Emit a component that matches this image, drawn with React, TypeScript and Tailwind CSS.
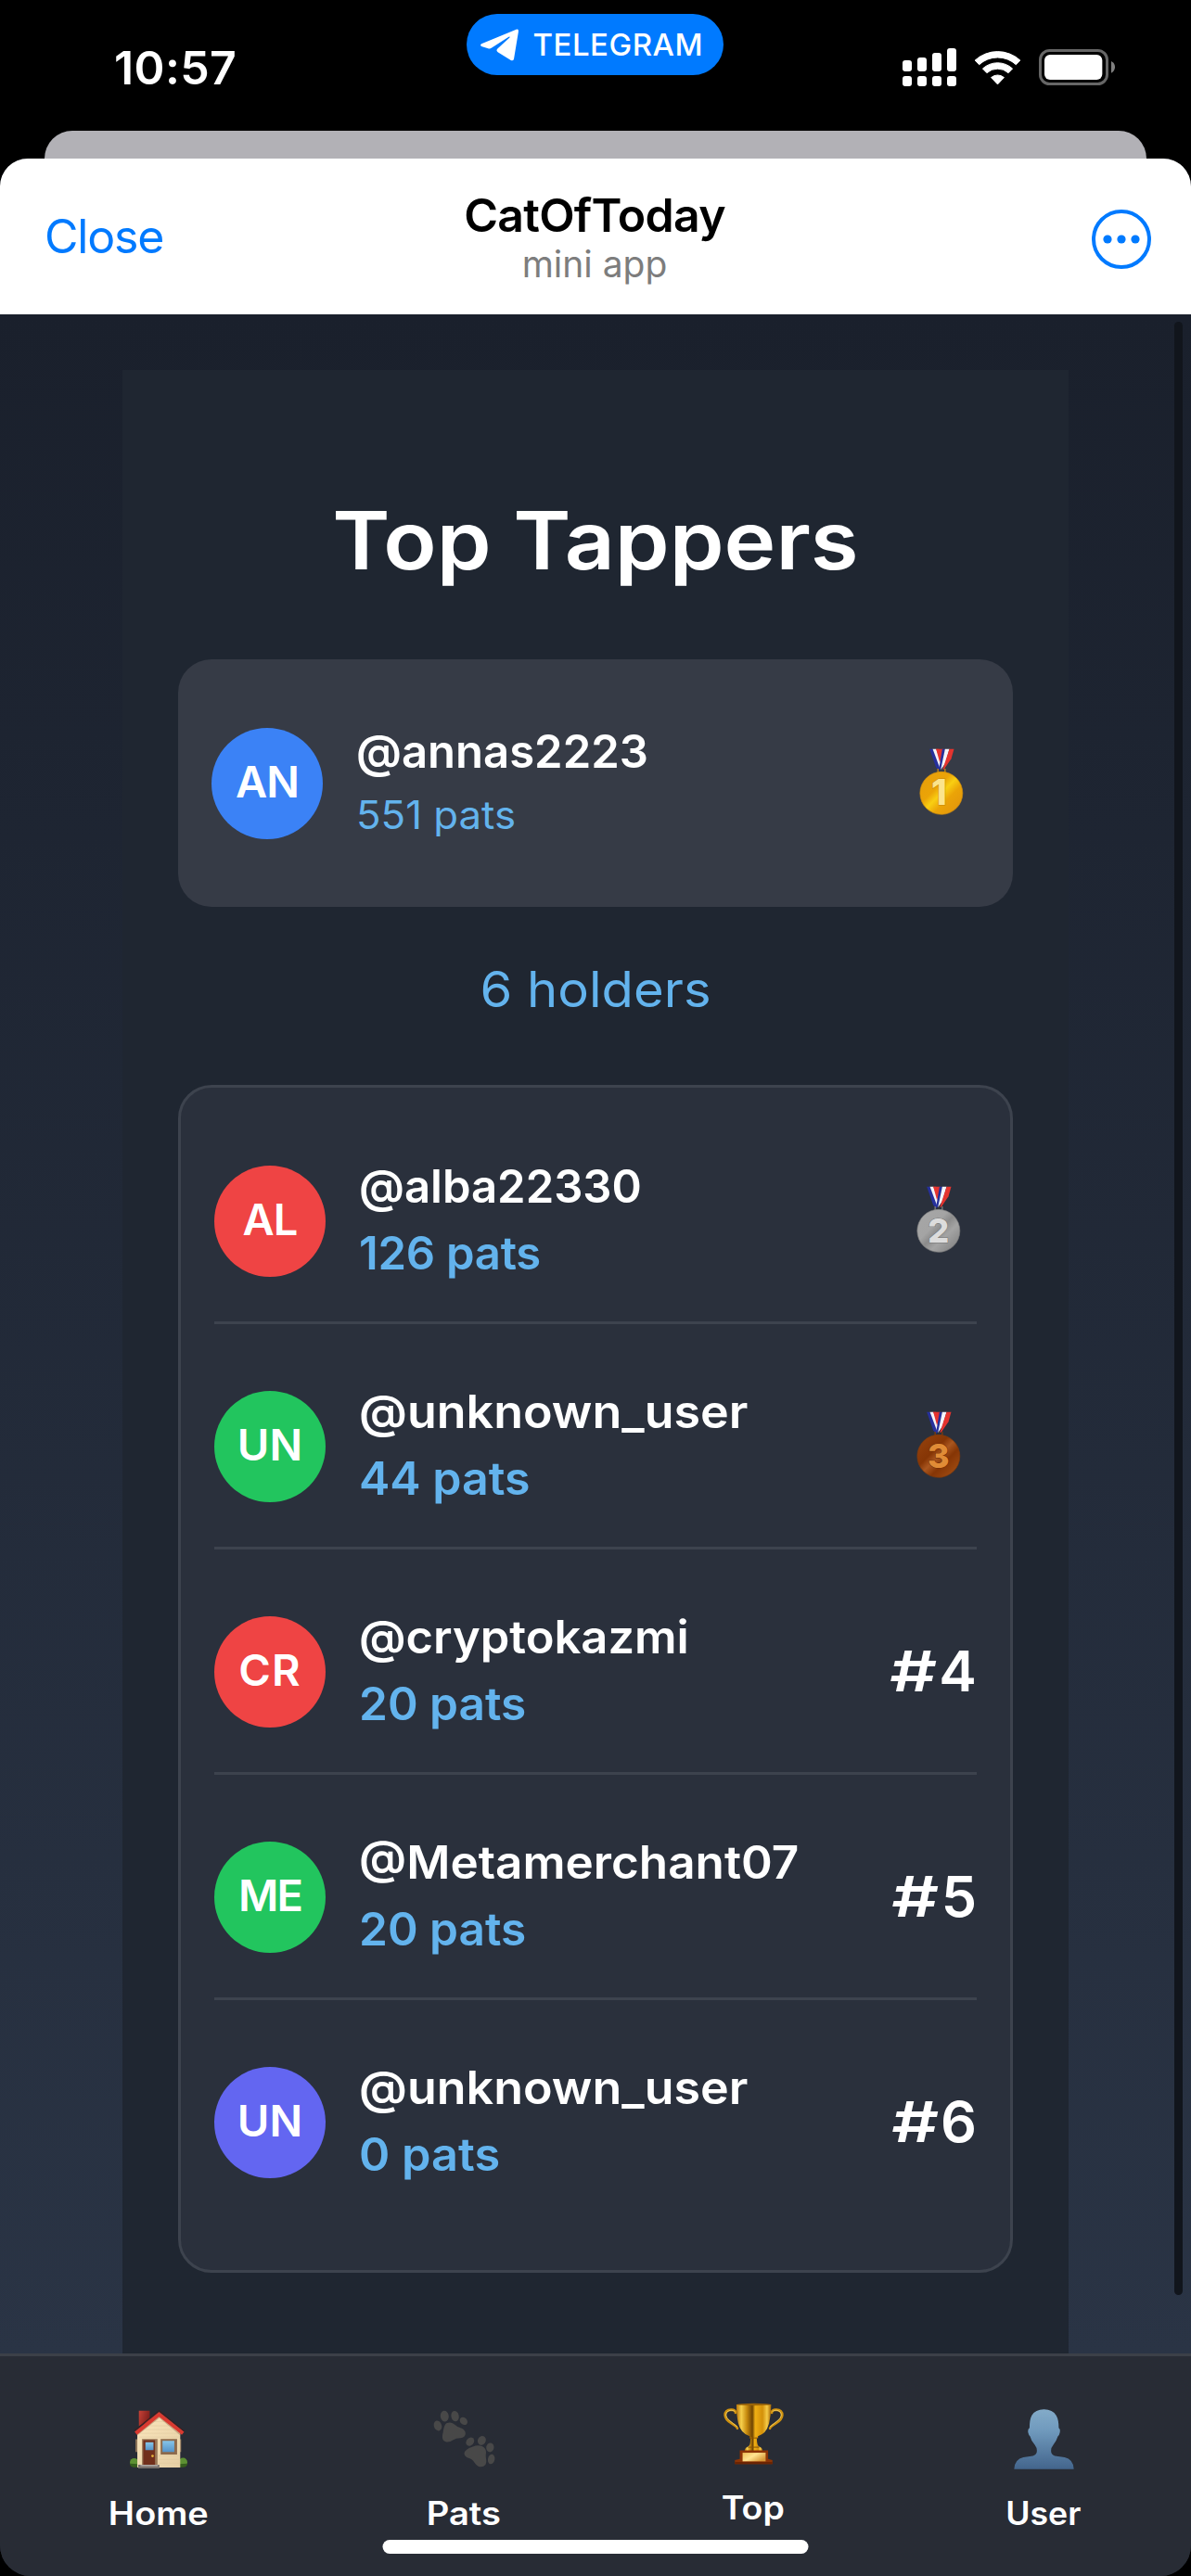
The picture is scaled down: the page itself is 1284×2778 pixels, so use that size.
import type { ReactNode } from "react";

type MedalTone = "gold" | "silver" | "bronze";

const medalTones: Record<MedalTone, { stops: string[]; rim: string; digit: string; edge: string; label: string }> = {
  gold: { stops: ["#e79f0a", "#f9cf12", "#eba407", "#e3960c"], rim: "#c98a10", digit: "#fbe48c", edge: "#c78508", label: "1" },
  silver: { stops: ["#a6a6a6", "#8b8b8b", "#a4a4a4", "#858585"], rim: "#7d7d7d", digit: "#dcdcdc", edge: "#767676", label: "2" },
  bronze: { stops: ["#93400c", "#a9561f", "#853505", "#a04c12"], rim: "#7d3a0c", digit: "#e08c36", edge: "#6e2c04", label: "3" },
};

function Medal({ tone }: { tone: MedalTone }) {
  const t = medalTones[tone];
  return (
    <svg viewBox="94 82 143 216" className="h-[72px] w-[48px] shrink-0">
      <defs>
        <linearGradient id={`medal-${tone}`} x1="0.1" y1="0.1" x2="0.9" y2="0.9">
          <stop offset="0" stopColor={t.stops[0]} />
          <stop offset="0.35" stopColor={t.stops[2]} />
          <stop offset="0.5" stopColor={t.stops[1]} />
          <stop offset="0.68" stopColor={t.stops[2]} />
          <stop offset="1" stopColor={t.stops[3]} />
        </linearGradient>
      </defs>
      <path d="M146 84h26l-10 40z" fill="#e5342f" />
      <path d="M127 84h10l25 62-4 8-10-10z" fill="#26309c" />
      <path d="M137 84h11l20 52-7 12z" fill="#f4f4fa" />
      <path d="M148 84h9l8 28-5 16z" fill="#e5342f" />
      <path d="M168 84h9l-9 56-6 12-4-8z" fill="#26309c" />
      <path d="M177 84h14l-13 46-15 22z" fill="#f4f4fa" />
      <path d="M191 84h15l-9 32-22 32-6 4z" fill="#e5342f" />
      <path d="M154 148v12h23v-12" fill="none" stroke={t.rim} strokeWidth="4" />
      <circle cx="165" cy="227" r="69" fill={`url(#medal-${tone})`} stroke={t.rim} strokeWidth="2" />
      <text
        x={tone === "gold" ? 158 : 165}
        y="266"
        textAnchor="middle"
        fontFamily="Inter, sans-serif"
        fontWeight="800"
        fontSize={tone === "gold" ? 114 : 108}
        fill={t.digit}
        stroke={t.edge}
        strokeWidth="3"
        paintOrder="stroke"
      >
        {t.label}
      </text>
    </svg>
  );
}

function PlaneIcon() {
  return (
    <svg viewBox="83 93 129 107" className="h-[35px] w-[43px]" fill="#fff">
      <path d="M88 143 203 95q8-2 7 7l-15 90q-2 8-10 5l-43-27q-7-5-1-11l40-37q2-4-3-2l-56 36q-6 4-12 2l-22-7q-6-4 0-8z" />
    </svg>
  );
}

function SignalIcon() {
  return (
    <svg viewBox="69 36 174 123" className="h-[41px] w-[58px]" fill="#fff">
      <rect x="69" y="75" width="30" height="36" rx="9" />
      <rect x="117" y="66" width="30" height="45" rx="9" />
      <rect x="165" y="51" width="30" height="60" rx="9" />
      <rect x="213" y="36" width="30" height="75" rx="9" />
      <rect x="69" y="126" width="30" height="33" rx="9" />
      <rect x="117" y="126" width="30" height="33" rx="9" />
      <rect x="165" y="126" width="30" height="33" rx="9" />
      <rect x="213" y="126" width="30" height="33" rx="9" />
    </svg>
  );
}

function WifiIcon() {
  return (
    <svg viewBox="-77 -113 154 114" className="h-[38px] w-[51px]" fill="#fff" stroke="#fff" strokeWidth="3" strokeLinejoin="round">
      <path d="M-73.5-80A109 109 0 0 1 73.5-80L60-66A89 89 0 0 0-60-66z" />
      <path d="M-48.5-53A72 72 0 0 1 48.5-53L35-39A52 52 0 0 0-35-39z" />
      <path d="M-21-24A32 32 0 0 1 21-24L0-2z" />
    </svg>
  );
}

function BatteryIcon() {
  return (
    <svg viewBox="510 39 246 117" className="h-[39px] w-[82px]">
      <rect x="514.5" y="43.5" width="216" height="108" rx="30" fill="none" stroke="#666" strokeWidth="9" />
      <rect x="528" y="57" width="187" height="81" rx="18" fill="#fff" />
      <path d="M744 78q12 6 12 19t-12 19z" fill="#808080" />
    </svg>
  );
}

function HouseIcon() {
  return (
    <svg viewBox="120 117 185 188" className="h-[63px] w-[62px]">
      <defs>
        <linearGradient id="wall" x1="0" y1="0" x2="1" y2="1">
          <stop offset="0" stopColor="#fbe6bd" />
          <stop offset="1" stopColor="#e5cfa4" />
        </linearGradient>
        <linearGradient id="pane" x1="0" y1="0" x2="0" y2="1">
          <stop offset="0" stopColor="#86c5e8" />
          <stop offset="1" stopColor="#5593c9" />
        </linearGradient>
        <linearGradient id="chimney" x1="0" y1="0" x2="1" y2="0.4">
          <stop offset="0" stopColor="#c94136" />
          <stop offset="1" stopColor="#7e1f1c" />
        </linearGradient>
      </defs>
      <path d="M149 119h35v30l-35 20z" fill="url(#chimney)" />
      <circle cx="134" cy="286" r="14" fill="#5d9133" />
      <circle cx="291" cy="285" r="14" fill="#5d9133" />
      <path d="M120 289q1 12 14 12h12v-10zM305 289q-1 12-14 12h-12v-10z" fill="#365e1d" />
      <path d="M138 211h8v41h-8zM280 211h5v41h-5z" fill="#8c7358" />
      <path d="M144 190l70-58 68 58v112H144z" fill="url(#wall)" />
      <path d="M150 192h126M150 204h126M212 264h68M212 276h68M212 288h68M170 180h88M184 168h60M200 154h30" stroke="#dcc69d" strokeWidth="1.5" />
      <path d="M144 196l71-56 67 56" fill="none" stroke="#a98765" strokeWidth="4" opacity=".6" />
      <path d="M139 192l75-61 77 61" fill="none" stroke="#d93a30" strokeWidth="12" />
      <path d="M135 183l79-64 82 67" fill="none" stroke="#3a2020" strokeWidth="3" />
      <path d="M159 210h50v84h-50z" fill="#9b7a5a" />
      <path d="M163 214h38v80h-38z" fill="#71301c" />
      <path d="M170 221h26v25h-26z" fill="url(#pane)" />
      <circle cx="193" cy="265" r="4" fill="#e9b73c" />
      <path d="M219 210h53v50h-53z" fill="#8c6a4c" />
      <path d="M225 216h38v36h-38z" fill="url(#pane)" />
      <path d="M147 293h68v12h-68z" fill="#77706c" />
      <path d="M154 293h56v5h-56z" fill="#aaa39f" />
    </svg>
  );
}

function PawsIcon() {
  return (
    <svg viewBox="1100 115 200 187" className="h-[62px] w-[67px]" fill="#484848">
      <ellipse cx="1136" cy="135" rx="13.5" ry="18" transform="rotate(-8 1136 135)" />
      <ellipse cx="1170" cy="135" rx="12.5" ry="17" transform="rotate(-12 1170 135)" />
      <ellipse cx="1114" cy="166" rx="12.5" ry="17" transform="rotate(-18 1114 166)" />
      <ellipse cx="1198" cy="151" rx="11" ry="14" transform="rotate(-45 1198 151)" />
      <path d="M1142 158q15-6 26 4 8 8 22 12 14 6 14 17 0 14-17 15-14 0-23 6-10 8-22 7-12-2-13-14-1-8 2-17 3-24 11-30z" />
      <ellipse cx="1219" cy="218" rx="12" ry="15" transform="rotate(38 1219 218)" />
      <ellipse cx="1257" cy="214" rx="13" ry="15" transform="rotate(30 1257 214)" />
      <ellipse cx="1284" cy="237" rx="12.5" ry="15" transform="rotate(8 1284 237)" />
      <ellipse cx="1288" cy="275" rx="11" ry="16" transform="rotate(12 1288 275)" />
      <path d="M1228 234q16-6 30-1 13 6 13 20-2 10 0 20 2 14-2 20-6 8-17 7-10-1-18-13-6-11-18-15-15-4-16-15 0-14 28-23z" />
    </svg>
  );
}

function TrophyIcon() {
  return (
    <svg viewBox="118 92 196 200" className="h-[67px] w-[65px]">
      <defs>
        <linearGradient id="cup" x1="0" y1="0" x2="1" y2="0">
          <stop offset="0" stopColor="#b87508" />
          <stop offset="0.14" stopColor="#f7d04c" />
          <stop offset="0.3" stopColor="#c78a0e" />
          <stop offset="0.46" stopColor="#6f4402" />
          <stop offset="0.54" stopColor="#f0b014" />
          <stop offset="0.75" stopColor="#d3900a" />
          <stop offset="0.88" stopColor="#f6cb47" />
          <stop offset="1" stopColor="#a66604" />
        </linearGradient>
        <linearGradient id="plate" x1="0" y1="0" x2="1" y2="0.6">
          <stop offset="0" stopColor="#eebf56" />
          <stop offset="0.5" stopColor="#ffe490" />
          <stop offset="1" stopColor="#d99b3a" />
        </linearGradient>
      </defs>
      <g fill="none" stroke="#cf910f" strokeWidth="8" strokeLinecap="round">
        <path d="M157 124q0-10-14-10-20 1-20 18 1 14 20 26 20 12 20 17" />
        <path d="M275 124q0-10 14-10 20 1 20 18-1 14-20 26-20 12-20 17" />
      </g>
      <g fill="none" stroke="#f7d66a" strokeWidth="2.5" strokeLinecap="round">
        <path d="M154 119q-12-8-24 2-10 12 6 27 12 10 26 21" />
        <path d="M278 119q12-8 24 2 10 12-6 27-12 10-26 21" />
      </g>
      <path d="M160 97h113q0 34-7 62-9 34-36 41v6h-27v-6q-29-9-37-42-6-26-6-61z" fill="url(#cup)" />
      <ellipse cx="216.500" cy="97" rx="56" ry="3.500" fill="#9a6408" />
      <path d="M206 203h20l1 16q2 14 9 16 9 4 9 13h-58q0-9 9-13 8-3 9-16z" fill="url(#cup)" />
      <path d="M202 206h28M198 236h36" stroke="#8a5403" strokeWidth="3" />
      <path d="M171 246h92v28l14 4v13H155v-13l16-4z" fill="#8c3406" />
      <path d="M155 284h122v7H155z" fill="#6b2402" />
      <path d="M180 254h75v28h-75z" fill="url(#plate)" />
    </svg>
  );
}

function PersonIcon() {
  return (
    <svg viewBox="1057 110 196 196" className="h-[65px] w-[65px]">
      <defs>
        <linearGradient id="person" x1="0" y1="0" x2="0" y2="1">
          <stop offset="0" stopColor="#83abc9" />
          <stop offset="0.35" stopColor="#709abd" />
          <stop offset="1" stopColor="#43658c" />
        </linearGradient>
      </defs>
      <path
        d="M1155 111q28 0 40 20 8 14 8 40 6 4 4 14-2 11-7 14-4 14-15 28-7 8-7 18-1 12 12 17l32 5q28 6 30 38H1058q2-32 30-38l31-5q14-5 13-17 0-10-7-19-12-13-15-27-5-4-7-14-1-10 5-14 0-26 7-40 12-20 40-20z"
        fill="url(#person)"
      />
    </svg>
  );
}

function Avatar({ initials, className }: { initials: string; className: string }) {
  return (
    <div className={`flex size-[120px] shrink-0 items-center justify-center rounded-full pb-[5px] text-[47px] font-semibold leading-none ${className}`}>
      {initials}
    </div>
  );
}

interface Holder {
  initials: string;
  color: string;
  name: string;
  nameClass: string;
  pats: string;
  patsClass: string;
  medal?: MedalTone;
  rank?: string;
}

const holders: Holder[] = [
  { initials: "AL", color: "tracking-[-1px] bg-[#ef4444]", name: "@alba22330", nameClass: "", pats: "126 pats", patsClass: "tracking-[-0.25px]", medal: "silver" },
  { initials: "UN", color: "bg-[#22c55e]", name: "@unknown_user", nameClass: "scale-x-[1.061]", pats: "44 pats", patsClass: "scale-x-[1.022]", medal: "bronze" },
  { initials: "CR", color: "tracking-[1px] bg-[#ef4444]", name: "@cryptokazmi", nameClass: "scale-x-[1.033]", pats: "20 pats", patsClass: "scale-x-[1.012]", rank: "4" },
  { initials: "ME", color: "tracking-[-2px] bg-[#22c55e]", name: "@Metamerchant07", nameClass: "scale-x-[1.045]", pats: "20 pats", patsClass: "scale-x-[1.012]", rank: "5" },
  { initials: "UN", color: "bg-[#6366f1]", name: "@unknown_user", nameClass: "scale-x-[1.061]", pats: "0 pats", patsClass: "scale-x-[1.03]", rank: "6" },
];

function HolderRow({ h }: { h: Holder }) {
  return (
    <li className="flex h-[243px] items-center border-b-[3px] border-[#3d434e] pt-[24px] last:border-transparent">
      <Avatar initials={h.initials} className={h.color} />
      <div className="ml-[36px] flex-1 pb-[3px] text-[49px] font-semibold leading-[72px]">
        <p className={`origin-left ${h.nameClass}`}>{h.name}</p>
        <p className={`origin-left text-[#63b3ed] ${h.patsClass}`}>{h.pats}</p>
      </div>
      {h.medal && (
        <div className="mr-[17px] pb-[5px]">
          <Medal tone={h.medal} />
        </div>
      )}
      {h.rank && (
        <p className="pb-[2px] text-[61px] font-semibold leading-[72px]">
          <span className="mr-[2px] inline-block origin-right scale-x-[1.3]">#</span>
          {h.rank}
        </p>
      )}
    </li>
  );
}

function NavItem({ icon, label, className, labelClass }: { icon: ReactNode; label: string; className: string; labelClass: string }) {
  return (
    <a className={`flex flex-col items-center text-[35px] font-semibold ${className}`}>
      <span className="flex h-[66px] items-center">{icon}</span>
      <span className={`mt-[23px] leading-[48px] ${labelClass}`}>{label}</span>
    </a>
  );
}

export default function App() {
  return (
    <div className="relative flex h-[2778px] w-[1284px] flex-col overflow-hidden bg-black font-['Inter',sans-serif] text-white">
      <header className="grid h-[141px] shrink-0 grid-cols-3">
        <p className="mt-[38px] pl-[123px] text-[50px] font-semibold leading-[70px] tracking-[0.4px]">10:57</p>
        <div className="mt-[15px] mr-[2px] flex h-[66px] w-[277px] items-center justify-self-center rounded-full bg-[#007aff] pl-[14px]">
          <PlaneIcon />
          <span className="ml-[15px] text-[33px] font-medium leading-none tracking-[0.5px]">TELEGRAM</span>
        </div>
        <div className="mt-[52px] flex h-[41px] items-center gap-[19px] justify-self-end pr-[82px]">
          <SignalIcon />
          <WifiIcon />
          <BatteryIcon />
        </div>
      </header>

      <div className="mx-[48px] h-[30px] shrink-0 rounded-t-[30px] bg-[#b2b1b6]" />

      <div className="flex min-h-0 flex-1 flex-col overflow-hidden rounded-t-[30px] rounded-b-[33px] bg-[#282c35]">
        <div className="grid h-[168px] shrink-0 grid-cols-3 items-center bg-white">
          <button className="pl-[48px] text-left text-[50px] leading-[60px] tracking-[-1.2px] text-[#007aff]">Close</button>
          <div className="pr-[2px] text-center">
            <h2 className="text-[50px] font-semibold leading-[60px] tracking-[-0.75px] text-black">CatOfToday</h2>
            <p className="text-[39px] leading-[46px] text-[#7d7d7d]">mini app</p>
          </div>
          <svg viewBox="0 0 64 64" className="mt-[6px] mr-[43px] size-[64px] justify-self-end">
            <circle cx="32" cy="32" r="30" fill="none" stroke="#007aff" strokeWidth="4" />
            <g fill="#007aff">
              <circle cx="17" cy="32" r="4.600" />
              <circle cx="32" cy="32" r="4.600" />
              <circle cx="47" cy="32" r="4.600" />
            </g>
          </svg>
        </div>

        <main className="relative flex min-h-0 flex-1 flex-col bg-linear-to-b from-[#1a202c] to-[#2a3445] px-[132px] pt-[60px]">
          <section className="flex-1 bg-[#1f2631] px-[60px] pt-[130px]">
            <h1 className="scale-x-[1.097] text-center text-[86px] font-semibold leading-[108px]">Top Tappers</h1>

            <div className="mt-[74px] flex h-[267px] items-center rounded-[36px] bg-[#363b46] px-[36px]">
              <Avatar initials="AN" className="bg-[#3b82f6] tracking-[-1px]" />
              <div className="ml-[36px] flex-1 leading-[68px]">
                <p className="text-[49px] font-semibold">@annas2223</p>
                <p className="origin-left scale-x-[1.042] text-[42px] text-[#63b3ed]">551 pats</p>
              </div>
              <div className="mr-[17px] pb-[3px]">
                <Medal tone="gold" />
              </div>
            </div>

            <p className="mt-[49px] mb-[63px] scale-x-[1.06] text-center text-[53px] leading-[80px] text-[#63b3ed]">6 holders</p>

            <ul className="rounded-[36px] border-[3px] border-[#3d434e] bg-[#2a303c] px-[36px] pt-[12px] pb-[48px]">
              {holders.map((h, i) => (
                <HolderRow key={i} h={h} />
              ))}
            </ul>
          </section>
          <div className="absolute top-[8px] right-[9px] bottom-[63px] w-[9px] rounded-full bg-[#11151c]" />
        </main>

        <nav className="flex h-[240px] shrink-0 border-t-[3px] border-[#3c4048] bg-[#282c35] pt-[56px]">
          <NavItem icon={<HouseIcon />} label="Home" className="w-[342px]" labelClass="scale-x-[1.083]" />
          <NavItem icon={<PawsIcon />} label="Pats" className="w-[316px]" labelClass="scale-x-[1.09]" />
          <NavItem icon={<TrophyIcon />} label="Top" className="w-[308px] -translate-y-[6px]" labelClass="scale-x-[1.07]" />
          <NavItem icon={<PersonIcon />} label="User" className="w-[318px]" labelClass="scale-x-[1.02]" />
        </nav>
      </div>

      <div className="absolute bottom-[24px] left-1/2 h-[15px] w-[459px] -translate-x-1/2 rounded-full bg-white" />
    </div>
  );
}
